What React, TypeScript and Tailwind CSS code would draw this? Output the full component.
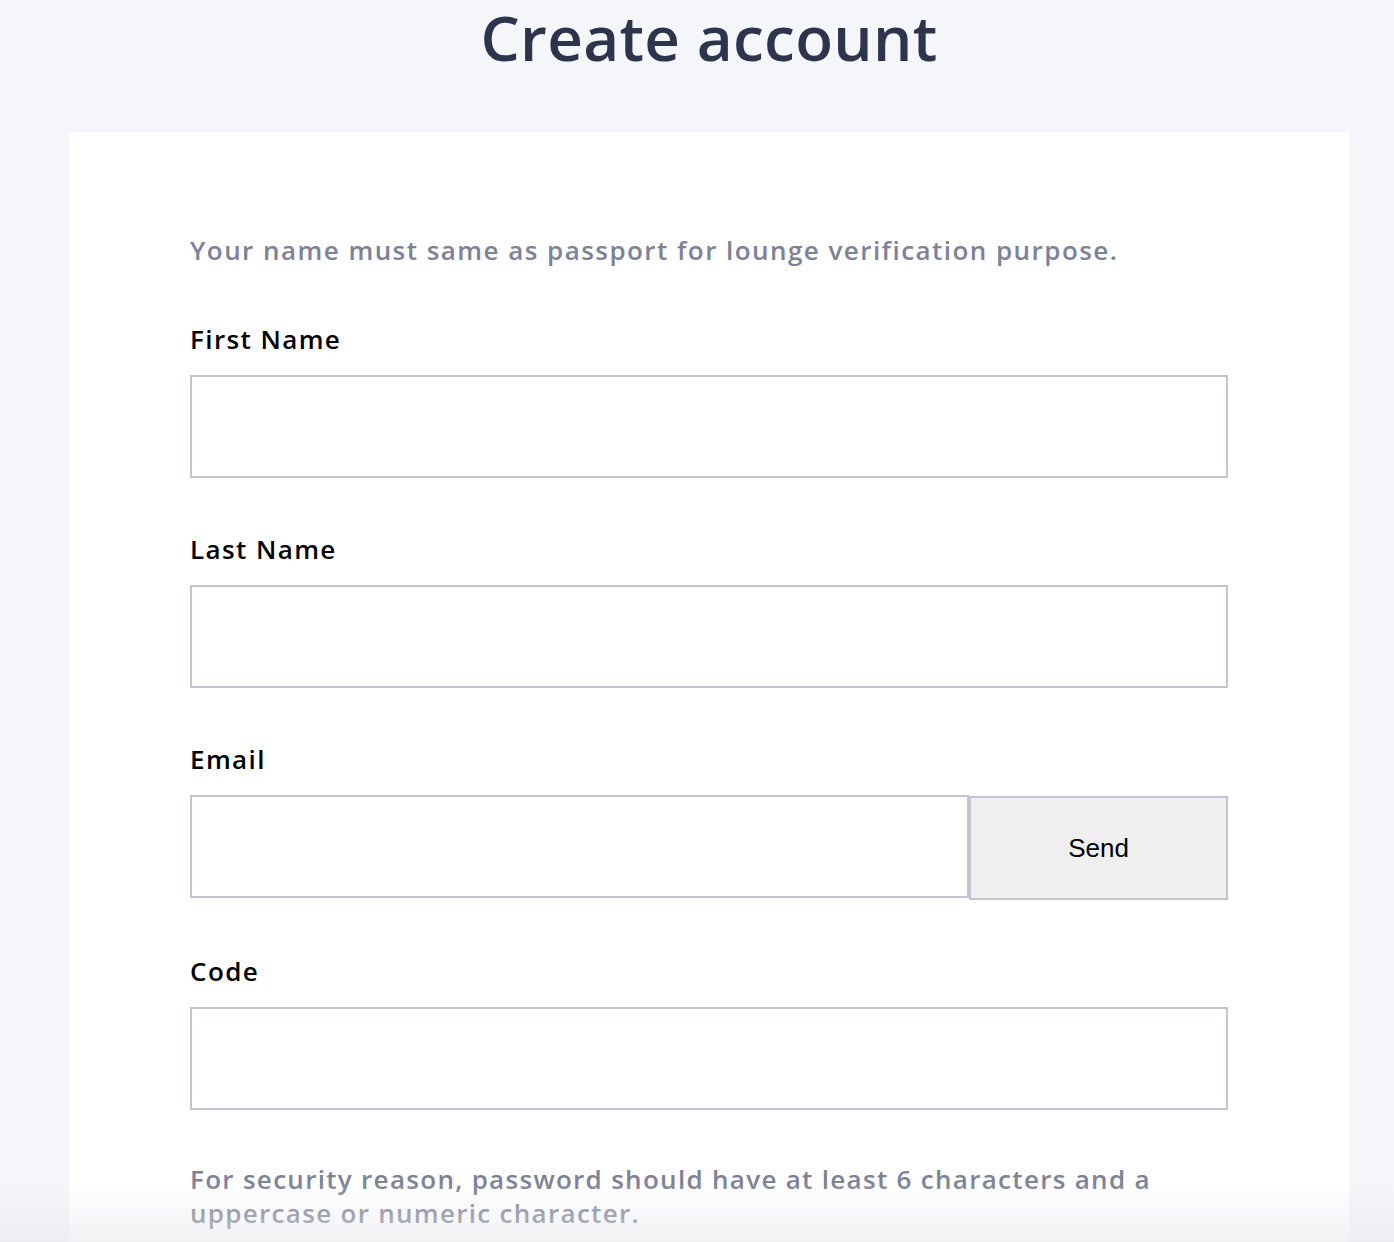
import React from 'react';

const font = { fontFamily: '"Open Sans", "Noto Sans", sans-serif' };

function Field({ label, children }: { label: string; children: React.ReactNode }) {
  return (
    <div className="mt-[53px]">
      <label className="block text-[26px] leading-[36px] font-semibold tracking-[1.4px] text-black">{label}</label>
      <div className="mt-[18px]">{children}</div>
    </div>
  );
}

export default function App() {
  return (
    <div className="relative h-[1242px] overflow-hidden bg-[#f5f6f9]" style={font}>
      <div className="ml-[69px] w-[1280px]">
        <h1 className="pt-[2px] text-center text-[62px] leading-[70px] font-semibold tracking-[0.3px] text-[#2c354b]">
          Create account
        </h1>
        <div className="mt-[61px] bg-white px-[121px] pt-[100px] pb-[60px]">
          <p className="text-[26px] leading-[35px] font-semibold tracking-[1.45px] text-[#7d8296]">
            Your name must same as passport for lounge verification purpose.
          </p>
          <Field label="First Name">
            <input className="block h-[103px] w-full border-2 border-[#c3c3d3] bg-white outline-none" />
          </Field>
          <Field label="Last Name">
            <input className="block h-[103px] w-full border-2 border-[#c3c3d3] bg-white outline-none" />
          </Field>
          <Field label="Email">
            <div className="flex items-start">
              <input className="block h-[103px] flex-1 border-2 border-[#c3c3d3] bg-white outline-none" />
              <button
                className="mt-px h-[104px] w-[259px] border-2 border-[#c3c3d3] bg-[#efefef] text-[26px] text-black"
                style={{ fontFamily: '"Liberation Sans", Arial, sans-serif' }}
              >
                Send
              </button>
            </div>
          </Field>
          <Field label="Code">
            <input className="block h-[103px] w-full border-2 border-[#c3c3d3] bg-white outline-none" />
          </Field>
          <p className="mt-[52px] text-[26px] leading-[34px] font-semibold tracking-[1.3px] text-[#7d8296]">
            For security reason, password should have at least 6 characters and a uppercase or numeric character.
          </p>
        </div>
      </div>
      <div className="pointer-events-none absolute inset-x-0 bottom-0 h-[60px] bg-gradient-to-b from-transparent to-[#e8e9ed]/60" />
    </div>
  );
}
